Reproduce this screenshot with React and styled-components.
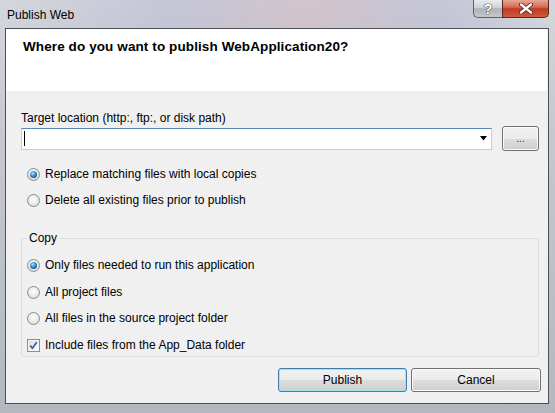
import React from "react";
import styled, { createGlobalStyle } from "styled-components";

const GlobalStyle = createGlobalStyle`
  html, body {
    margin: 0;
    padding: 0;
  }
  body {
    font-family: "Liberation Sans", Arial, sans-serif;
    font-size: 12px;
    color: #000;
    background: #b9bdc4;
  }
`;

const Window = styled.div`
  width: 555px;
  height: 413px;
  box-sizing: border-box;
  padding-bottom: 9px;
  display: flex;
  flex-direction: column;
  background:
    linear-gradient(90deg, rgba(255, 255, 255, 0) 0%, rgba(150, 150, 200, 0.25) 30%, rgba(200, 120, 140, 0.2) 55%, rgba(150, 150, 200, 0.25) 80%, rgba(255, 255, 255, 0) 100%) 0 0 / 100% 28px no-repeat,
    linear-gradient(180deg, #d4d7dc 0%, #c6cad0 30%, #b3b7be 100%);
`;

const TitleBar = styled.div`
  height: 28px;
  flex-shrink: 0;
  display: flex;
  justify-content: space-between;
  align-items: flex-start;
  padding-left: 7px;
`;

const Title = styled.div`
  margin-top: 8px;
  line-height: 15px;
  font-size: 12px;
  color: #000;
`;

const CaptionButtons = styled.div`
  display: flex;
  margin-right: 6px;
`;

const HelpButton = styled.div`
  width: 29px;
  height: 18px;
  box-sizing: border-box;
  border: 1px solid #5d6167;
  border-top: none;
  border-right: none;
  border-radius: 0 0 0 5px;
  background: linear-gradient(180deg, #e9ebee 0%, #cfd2d6 45%, #aeb2b9 52%, #c4c8cd 100%);
  display: flex;
  align-items: center;
  justify-content: center;
  color: #fff;
  font-weight: bold;
  font-size: 14px;
  text-shadow: 0 0 1px #3a3d42, 0 0 1px #3a3d42, 0 0 1px #3a3d42;
`;

const CloseButton = styled.div`
  width: 47px;
  height: 18px;
  box-sizing: border-box;
  border: 1px solid #5a2a22;
  border-top: none;
  border-radius: 0 0 5px 0;
  background: linear-gradient(180deg, #e7a795 0%, #d46a52 42%, #c13a20 52%, #cc5a40 100%);
  display: flex;
  align-items: center;
  justify-content: center;
`;

const Client = styled.div`
  flex: 1;
  margin: 0 6px 0 5px;
  border: 1px solid #4c5056;
  background: #f0f0f0;
  display: flex;
  flex-direction: column;
`;

const Header = styled.div`
  height: 62px;
  background: #fff;
  margin-right: 1px;
  padding: 10px 0 0 17px;
  box-sizing: border-box;
`;

const Heading = styled.div`
  font-weight: bold;
  font-size: 13.5px;
  line-height: 15px;
  letter-spacing: 0.1px;
`;

const Body = styled.div`
  padding: 20px 7px 0 15px;
  display: flex;
  flex-direction: column;
`;

const FieldLabel = styled.div`
  line-height: 15px;
`;

const LocationRow = styled.div`
  display: flex;
  align-items: center;
  gap: 10px;
  height: 25px;
  margin-right: 2px;
`;

const Combo = styled.div`
  flex: 1;
  height: 22px;
  box-sizing: border-box;
  border: 1px solid #b6d0e8;
  border-top-color: #5b87b4;
  background: #fff;
  display: flex;
  align-items: center;
  padding: 0 4px 0 2px;
`;

const Caret = styled.span`
  width: 1px;
  height: 15px;
  background: #000;
`;

const ComboArrow = styled.svg`
  margin-left: auto;
`;

const Button = styled.button`
  width: ${(p) => p.$width}px;
  height: ${(p) => p.$height}px;
  box-sizing: border-box;
  padding: 0;
  border: 1px solid ${(p) => (p.$default ? "#3c7fb1" : "#707070")};
  border-radius: 3px;
  box-shadow: inset 0 0 0 1px ${(p) => (p.$default ? "#9fe2f7" : "#fbfbfb")};
  background: linear-gradient(180deg, #f2f2f2 0%, #ebebeb 50%, #dddddd 51%, #cfcfcf 100%);
  font-family: "Liberation Sans", Arial, sans-serif;
  font-size: 12px;
  color: #000;
`;

const Dots = styled.span`
  font-size: 10px;
  color: #1c2c66;
  position: relative;
  top: -1px;
`;

const Options = styled.div`
  display: flex;
  flex-direction: column;
  margin-top: 10px;
`;

const OptionRow = styled.div`
  display: flex;
  align-items: center;
  gap: 5px;
  box-sizing: border-box;
  height: ${(p) => p.$height || 26}px;
  padding-top: ${(p) => p.$top || 0}px;
  padding-left: ${(p) => p.$indent}px;
  line-height: 15px;
`;

const RadioCircle = styled.span`
  width: 13px;
  height: 13px;
  box-sizing: border-box;
  flex-shrink: 0;
  border-radius: 50%;
  border: 1px solid #8b8c8e;
  background: radial-gradient(circle at 50% 40%, #fdfdfd 0%, #eeeeee 45%, #cdcfd1 100%);
  display: flex;
  align-items: center;
  justify-content: center;

  &::after {
    content: "";
    display: ${(p) => (p.$checked ? "block" : "none")};
    width: 7px;
    height: 7px;
    border-radius: 50%;
    background: radial-gradient(circle at 40% 35%, #b5e6ff 0%, #4a9ad8 35%, #1b5e9a 70%, #103d68 100%);
  }
`;

const CheckBox = styled.span`
  width: 13px;
  height: 13px;
  box-sizing: border-box;
  flex-shrink: 0;
  border: 1px solid #8e8f8f;
  box-shadow: inset 0 0 0 1px #f4f4f4;
  background: linear-gradient(135deg, #d8d9db 0%, #f6f6f6 70%, #ffffff 100%);
  display: flex;
  align-items: center;
  justify-content: center;
`;

const Group = styled.fieldset`
  margin: 18px 2px 0 0;
  padding: 6px 0 0 0;
  min-width: 0;
  border: 1px solid #d5dfe5;
  border-radius: 3px;
`;

const Legend = styled.legend`
  padding: 0 2px;
  margin-left: 5px;
  line-height: 15px;
`;

const ButtonRow = styled.div`
  display: flex;
  justify-content: flex-end;
  gap: 4px;
  margin-top: 11px;
`;

const Radio = ({ checked, label, indent, height }) => (
  <OptionRow $indent={indent} $height={height}>
    <RadioCircle $checked={checked} />
    <span>{label}</span>
  </OptionRow>
);

export default function App() {
  return (
    <>
      <GlobalStyle />
      <Window>
        <TitleBar>
          <Title>Publish Web</Title>
          <CaptionButtons>
            <HelpButton>?</HelpButton>
            <CloseButton>
              <svg width="14" height="11" viewBox="0 0 14 11">
                <path d="M2 1.5 L12 9.5 M12 1.5 L2 9.5" stroke="#4a2018" strokeWidth="4" strokeLinecap="round" />
                <path d="M2 1.5 L12 9.5 M12 1.5 L2 9.5" stroke="#fff" strokeWidth="2.4" strokeLinecap="round" />
              </svg>
            </CloseButton>
          </CaptionButtons>
        </TitleBar>
        <Client>
          <Header>
            <Heading>Where do you want to publish WebApplication20?</Heading>
          </Header>
          <Body>
            <FieldLabel>Target location (http:, ftp:, or disk path)</FieldLabel>
            <LocationRow>
              <Combo>
                <Caret />
                <ComboArrow width="7" height="5" viewBox="0 0 7 5">
                  <polygon points="0,0 7,0 3.5,4.5" fill="#000" />
                </ComboArrow>
              </Combo>
              <Button $width={37} $height={25}>
                <Dots>...</Dots>
              </Button>
            </LocationRow>
            <Options>
              <Radio checked indent={6} label="Replace matching files with local copies" />
              <Radio indent={6} label="Delete all existing files prior to publish" />
            </Options>
            <Group>
              <Legend>Copy</Legend>
              <Radio checked indent={5} height={27} label="Only files needed to run this application" />
              <Radio indent={5} label="All project files" />
              <Radio indent={5} height={27} label="All files in the source project folder" />
              <OptionRow $indent={5} $height={24} $top={2}>
                <CheckBox>
                  <svg width="9" height="9" viewBox="0 0 9 9">
                    <path d="M1.2 4.6 L3.4 7.2 L7.8 1.2" stroke="#3f57a3" strokeWidth="1.7" fill="none" />
                  </svg>
                </CheckBox>
                <span>Include files from the App_Data folder</span>
              </OptionRow>
            </Group>
            <ButtonRow>
              <Button $width={129} $height={24} $default>
                Publish
              </Button>
              <Button $width={130} $height={24}>
                Cancel
              </Button>
            </ButtonRow>
          </Body>
        </Client>
      </Window>
    </>
  );
}
